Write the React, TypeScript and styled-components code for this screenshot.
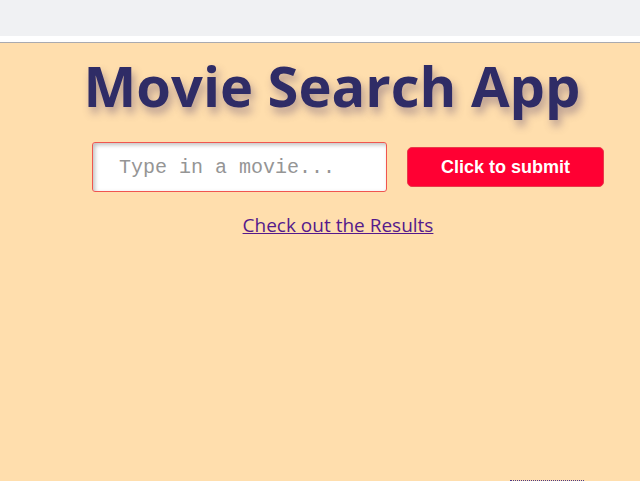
import React from "react";
import styled, { createGlobalStyle } from "styled-components";

const Global = createGlobalStyle`
  html, body { margin: 0; padding: 0; background: #ffdead; }
  body { overflow: hidden; }
`;

const Page = styled.div`
  width: 640px;
  height: 481px;
  display: flex;
  flex-direction: column;
  background: #ffdead;
  overflow: hidden;
`;

const TopBar = styled.div`
  height: 36px;
  background: #f0f1f3;
`;

const Gap = styled.div`
  height: 6px;
  background: #ffffff;
  border-bottom: 1px solid #a9aab0;
`;

const Main = styled.main`
  flex: 1;
  display: flex;
  flex-direction: column;
  align-items: center;
  position: relative;
`;

const Title = styled.h1`
  margin: 2px 0 0 24px;
  font-family: "Open Sans", sans-serif;
  font-weight: 700;
  font-size: 56px;
  line-height: 80px;
  height: 88px;
  color: #2f2c66;
  text-shadow: 3px 6px 8px rgba(90, 70, 110, 0.45);
`;

const Form = styled.form`
  display: flex;
  align-items: center;
  gap: 20px;
  margin: 9px 0 0 92px;
  align-self: flex-start;
`;

const Input = styled.input`
  box-sizing: border-box;
  width: 295px;
  height: 50px;
  padding: 0 0 0 26px;
  border: 1px solid #f0554f;
  border-radius: 3px;
  background: #ffffff;
  box-shadow: inset 2px 2px 4px rgba(0, 0, 0, 0.25);
  font-family: "Liberation Mono", monospace;
  font-size: 20px;
  color: #333;
  outline: none;
  &::placeholder { color: #959595; }
`;

const Button = styled.button`
  box-sizing: border-box;
  width: 197px;
  height: 40px;
  border: 1px solid #e83a4a;
  border-radius: 5px;
  background: #ff0033;
  color: #ffffff;
  font-family: "Liberation Sans", Arial, sans-serif;
  font-weight: 700;
  font-size: 18px;
  cursor: pointer;
`;

const ResultsLink = styled.a`
  margin: 20px 0 0 36px;
  font-family: "Open Sans", sans-serif;
  font-size: 19px;
  color: #551a8b;
  text-decoration: underline;
`;

const Dotted = styled.div`
  position: absolute;
  left: 510px;
  bottom: -10px;
  width: 74px;
  height: 10px;
  border-top: 1px dotted #4b3a8a;
`;

export default function App() {
  return (
    <>
      <Global />
      <Page>
        <TopBar />
        <Gap />
        <Main>
          <Title>Movie Search App</Title>
          <Form onSubmit={(e) => e.preventDefault()}>
            <Input type="text" placeholder="Type in a movie..." />
            <Button type="submit">Click to submit</Button>
          </Form>
          <ResultsLink href="#results">Check out the Results</ResultsLink>
          <Dotted />
        </Main>
      </Page>
    </>
  );
}
